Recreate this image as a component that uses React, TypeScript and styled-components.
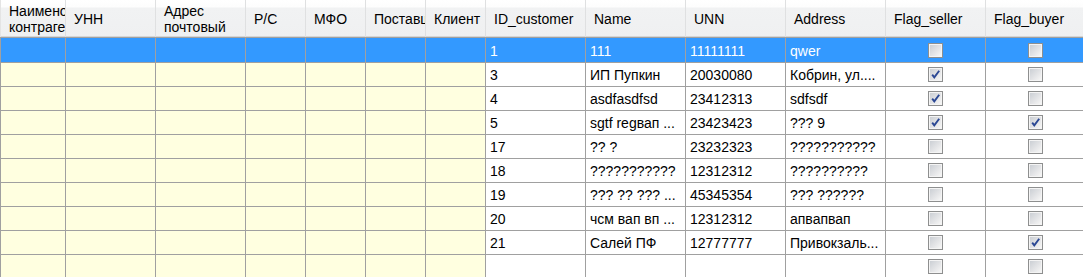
import React from "react";
import styled, { createGlobalStyle } from "styled-components";

const GlobalStyle = createGlobalStyle`
  html, body { margin: 0; padding: 0; background: #ffffff; overflow: hidden; }
  body { font-family: "Liberation Sans", Arial, sans-serif; font-size: 14px; }
  #root { width: 1083px; height: 277px; overflow: hidden; }
`;

const COLS = "66px 90px 90px 60px 60px 60px 60px 100px 100px 100px 100px 100px 100px";

const Grid = styled.div`
  display: flex;
  flex-direction: column;
  width: 1086px;
`;

const HeaderRow = styled.div`
  display: grid;
  grid-template-columns: ${COLS};
  height: 38px;
  box-sizing: border-box;
  border-bottom: 1px solid #a0a0a0;
  box-shadow: inset 0 -1px 0 #d5d5d5;
  background: linear-gradient(to bottom, #ffffff 0, #fdfdfd 7px, #f1f2f3 8px, #eff0f1 100%);
`;

const HeaderCell = styled.div`
  display: flex;
  align-items: center;
  box-sizing: border-box;
  padding-left: 8px;
  padding-top: 1px;
  border-right: 1px solid #dfe0e1;
  overflow: hidden;
  color: #000;
  line-height: 16px;
  &:first-child { border-left: 1px solid #e4e4e4; }
`;

const HeaderText = styled.span`
  white-space: normal;
`;

const Row = styled.div`
  display: grid;
  grid-template-columns: ${COLS};
  height: 24px;
  box-sizing: border-box;
  border-bottom: 1px solid #a0a0a0;
  &:first-child { height: 25px; }
`;

const Cell = styled.div<{ $tone: "yellow" | "white"; $selected?: boolean; $center?: boolean }>`
  display: flex;
  align-items: center;
  justify-content: ${(p) => (p.$center ? "center" : "flex-start")};
  box-sizing: border-box;
  padding: ${(p) => (p.$center ? "0 4px" : "1px 4px 0")};
  border-right: 1px solid #a0a0a0;
  white-space: nowrap;
  overflow: hidden;
  background: ${(p) => (p.$selected ? "#3399ff" : p.$tone === "yellow" ? "#ffffe0" : "#ffffff")};
  color: ${(p) => (p.$selected ? "#ffffff" : "#000000")};
  &:first-child { border-left: 1px solid #a0a0a0; }
`;

const CheckBox = styled.span`
  display: flex;
  width: 15px;
  height: 15px;
  box-sizing: border-box;
  border: 1px solid #8e8f8f;
  background: #f4f4f4;
  padding: 1px;
`;

const CheckInner = styled.span`
  display: flex;
  flex: 1;
  background: linear-gradient(135deg, #cbcfd4 0%, #e3e4e6 55%, #f6f6f6 100%);
`;

const Check = ({ on }: { on: boolean }) => (
  <CheckBox>
    <CheckInner>
      {on && (
        <svg width="11" height="11" viewBox="0 0 11 11">
          <path d="M2.2 5.6 L4.3 8.4 L9.2 1.8" fill="none" stroke="#2b4894" strokeWidth="1.9" strokeLinejoin="miter" />
        </svg>
      )}
    </CheckInner>
  </CheckBox>
);

const headers = [
  "Наименование контрагента",
  "УНН",
  "Адрес почтовый",
  "Р/С",
  "МФО",
  "Поставщик",
  "Клиент",
  "ID_customer",
  "Name",
  "UNN",
  "Address",
  "Flag_seller",
  "Flag_buyer",
];

type Rec = { id: string; name: string; unn: string; addr: string; seller: boolean; buyer: boolean };

const data: Rec[] = [
  { id: "1", name: "111", unn: "11111111", addr: "qwer", seller: false, buyer: false },
  { id: "3", name: "ИП Пупкин", unn: "20030080", addr: "Кобрин, ул....", seller: true, buyer: false },
  { id: "4", name: "asdfasdfsd", unn: "23412313", addr: "sdfsdf", seller: true, buyer: false },
  { id: "5", name: "sgtf regвап ...", unn: "23423423", addr: "??? 9", seller: true, buyer: true },
  { id: "17", name: "?? ?", unn: "23232323", addr: "???????????", seller: false, buyer: false },
  { id: "18", name: "???????????", unn: "12312312", addr: "??????????", seller: false, buyer: false },
  { id: "19", name: "??? ?? ??? ...", unn: "45345354", addr: "??? ??????", seller: false, buyer: false },
  { id: "20", name: "чсм вап вп ...", unn: "12312312", addr: "апвапвап", seller: false, buyer: false },
  { id: "21", name: "Салей ПФ", unn: "12777777", addr: "Привокзаль...", seller: false, buyer: true },
  { id: "", name: "", unn: "", addr: "", seller: false, buyer: false },
];

const Body = styled.div`
  display: flex;
  flex-direction: column;
`;

export default function App() {
  return (
    <>
      <GlobalStyle />
      <Grid>
        <HeaderRow>
          {headers.map((h) => (
            <HeaderCell key={h}>
              <HeaderText>{h}</HeaderText>
            </HeaderCell>
          ))}
        </HeaderRow>
        <Body>
          {data.map((r, i) => {
            const sel = i === 0;
            return (
              <Row key={i}>
                {Array.from({ length: 7 }).map((_, k) => (
                  <Cell key={k} $tone="yellow" $selected={sel} />
                ))}
                <Cell $tone="white" $selected={sel}>{r.id}</Cell>
                <Cell $tone="white" $selected={sel}>{r.name}</Cell>
                <Cell $tone="white" $selected={sel}>{r.unn}</Cell>
                <Cell $tone="white" $selected={sel}>{r.addr}</Cell>
                <Cell $tone="white" $selected={sel} $center>
                  <Check on={r.seller} />
                </Cell>
                <Cell $tone="white" $selected={sel} $center>
                  <Check on={r.buyer} />
                </Cell>
              </Row>
            );
          })}
        </Body>
      </Grid>
    </>
  );
}
